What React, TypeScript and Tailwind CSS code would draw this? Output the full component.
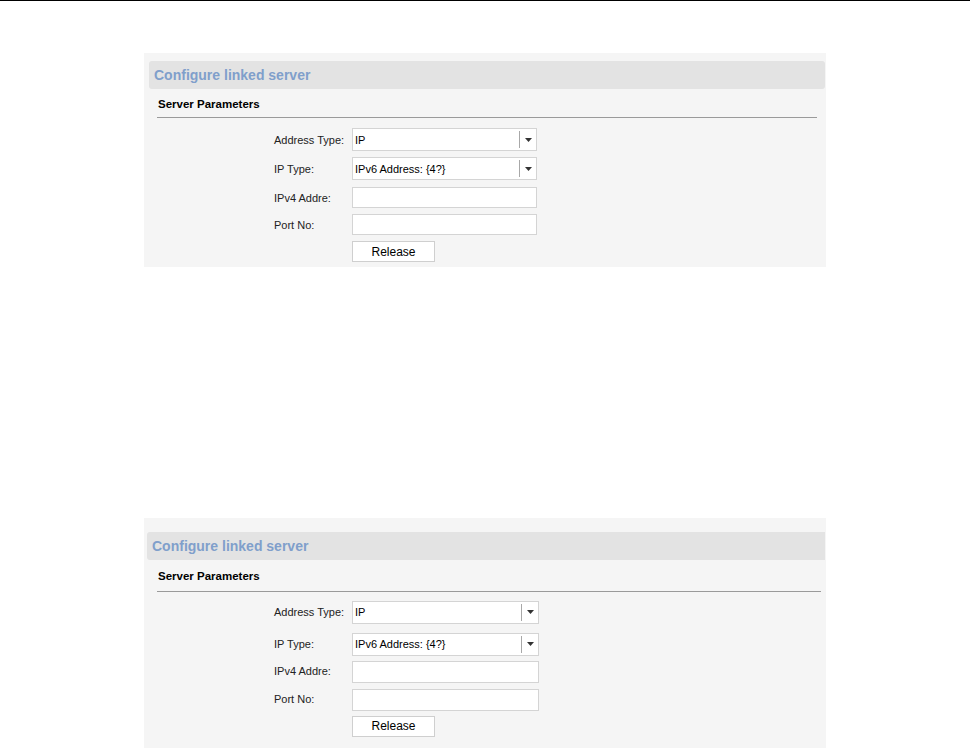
import React from "react";

type PanelProps = {
  topPad: string;
  headerInset: string;
  headerRound: string;
  paramsPad: string;
  lineRight: string;
  inputW: string;
  inputH: string;
  rowsPad: string;
  rowGaps: string[];
  bottomPad: string;
};

function Select({ value, w }: { value: string; w: string }) {
  return (
    <div className={`flex h-[23px] ${w} items-center border border-[#d4d4d4] bg-white`}>
      <span className="flex-1 pl-[2px] text-[11px] text-black">{value}</span>
      <span className="h-[17px] w-px bg-[#a8a8a8]" />
      <span className="flex w-[16px] justify-center">
        <svg width="7" height="4" viewBox="0 0 7 4">
          <path d="M0 0h7L3.5 4z" fill="#333" />
        </svg>
      </span>
    </div>
  );
}

function Input({ w, h }: { w: string; h: string }) {
  return <div className={`${h} ${w} border border-[#d4d4d4] bg-white`} />;
}

function Row({ label, children, mt }: { label: string; children: React.ReactNode; mt: string }) {
  return (
    <div className={`flex items-center ${mt}`}>
      <div className="mr-[4px] w-[74px] whitespace-nowrap text-[11px] text-[#222]">{label}</div>
      {children}
    </div>
  );
}

function Panel(p: PanelProps) {
  return (
    <div className={`ml-[144px] w-[682px] bg-[#f5f5f5] ${p.topPad} ${p.bottomPad}`}>
      <div
        className={`${p.headerInset} ${p.headerRound} mr-px flex h-[28px] items-center bg-[#e3e3e3] pl-[5px] text-[14px] font-bold text-[#809fcb]`}
      >
        Configure linked server
      </div>
      <div
        className={`ml-[13px] ${p.lineRight} border-b border-[#9a9a9a] ${p.paramsPad} pl-px text-[11.5px] font-bold text-black`}
      >
        Server Parameters
      </div>
      <div className={`ml-[130px] ${p.rowsPad}`}>
        <Row label="Address Type:" mt="mt-0">
          <Select value="IP" w={p.inputW} />
        </Row>
        <Row label="IP Type:" mt={p.rowGaps[0]}>
          <Select value="IPv6 Address: {4?}" w={p.inputW} />
        </Row>
        <Row label="IPv4 Addre:" mt={p.rowGaps[1]}>
          <Input w={p.inputW} h={p.inputH} />
        </Row>
        <Row label="Port No:" mt={p.rowGaps[2]}>
          <Input w={p.inputW} h={p.inputH} />
        </Row>
        <div className={`ml-[78px] ${p.rowGaps[3]}`}>
          <button className="block h-[21px] w-[83px] border border-[#cfcfcf] bg-white text-[12px] text-black">
            Release
          </button>
        </div>
      </div>
    </div>
  );
}

export default function App() {
  return (
    <div
      className="h-[748px] w-[970px] overflow-hidden bg-white"
      style={{ fontFamily: '"Liberation Sans", Arial, sans-serif' }}
    >
      <div className="h-px w-full bg-black" />
      <div className="pt-[52px]">
        <Panel
          topPad="pt-[8px]"
          headerInset="ml-[5px]"
          headerRound="rounded-[3px]"
          paramsPad="pt-[7px] pb-[4px]"
          lineRight="mr-[9px]"
          inputW="w-[185px]"
          inputH="h-[21px]"
          rowsPad="pt-[10px]"
          rowGaps={["mt-[6px]", "mt-[7px]", "mt-[6px]", "mt-[6px]"]}
          bottomPad="pb-[5px]"
        />
      </div>
      <div className="pt-[251px]">
        <Panel
          topPad="pt-[14px]"
          headerInset="ml-[3px]"
          headerRound="rounded-l-[3px]"
          paramsPad="pt-[8px] pb-[5px]"
          lineRight="mr-[5px]"
          inputW="w-[187px]"
          inputH="h-[22px]"
          rowsPad="pt-[9px]"
          rowGaps={["mt-[9px]", "mt-[5px]", "mt-[6px]", "mt-[5px]"]}
          bottomPad="pb-[20px]"
        />
      </div>
    </div>
  );
}
